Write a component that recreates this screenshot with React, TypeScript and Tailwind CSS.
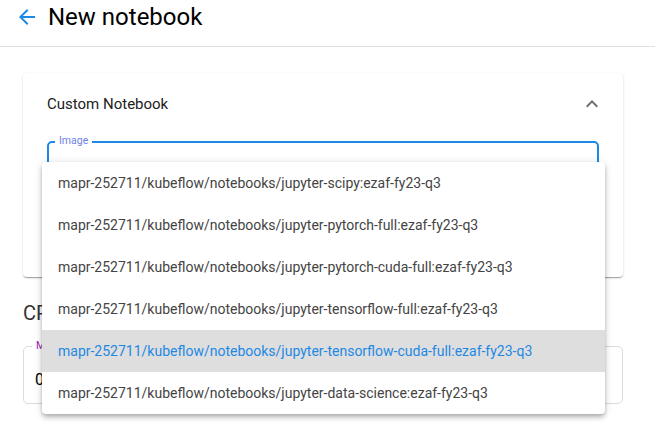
import React from "react";

const images = [
  "mapr-252711/kubeflow/notebooks/jupyter-scipy:ezaf-fy23-q3",
  "mapr-252711/kubeflow/notebooks/jupyter-pytorch-full:ezaf-fy23-q3",
  "mapr-252711/kubeflow/notebooks/jupyter-pytorch-cuda-full:ezaf-fy23-q3",
  "mapr-252711/kubeflow/notebooks/jupyter-tensorflow-full:ezaf-fy23-q3",
  "mapr-252711/kubeflow/notebooks/jupyter-tensorflow-cuda-full:ezaf-fy23-q3",
  "mapr-252711/kubeflow/notebooks/jupyter-data-science:ezaf-fy23-q3",
];

const selected = 4;

function ArrowBack() {
  return (
    <svg viewBox="0 0 24 24" className="h-6 w-6" fill="#1e88e5">
      <path d="M20 11H7.83l5.59-5.59L12 4l-8 8 8 8 1.41-1.41L7.83 13H20v-2z" />
    </svg>
  );
}

function ExpandLess() {
  return (
    <svg viewBox="0 0 24 24" className="h-6 w-6" fill="#6f6f6f">
      <path d="M12 8l-6 6 1.41 1.41L12 10.83l4.59 4.58L18 14z" />
    </svg>
  );
}

export default function App() {
  return (
    <div
      className="relative h-[431px] w-[655px] overflow-hidden bg-white"
      style={{ fontFamily: "Roboto, 'Liberation Sans', sans-serif" }}
    >
      <header className="flex h-[47px] items-center gap-[9px] border-b border-[#e0e0e0] pb-[12px] pl-[15px]">
        <ArrowBack />
        <h1 className="text-[24px] leading-[24px] text-black">New notebook</h1>
      </header>

      <div className="ml-[23px] w-[600px] pt-[26px]">
        <section className="rounded-[4px] bg-white px-6 pb-6 pt-5 shadow-[0_2px_1px_-1px_rgba(0,0,0,0.2),0_1px_1px_0_rgba(0,0,0,0.14),0_1px_3px_0_rgba(0,0,0,0.12)]">
          <div className="flex h-[22px] items-center justify-between">
            <span className="text-[15px] text-[#212121]">Custom Notebook</span>
            <span className="-mr-[5px]">
              <ExpandLess />
            </span>
          </div>
          <div className="relative mt-[26px] h-[56px] rounded-[5px] border-2 border-[#1e88e5]">
            <span className="absolute -top-[9px] left-[6px] bg-white px-[4px] text-[10.5px] leading-[14px] text-[#6e7fe6]">
              Image
            </span>
          </div>
          <div className="h-[56px]" />
        </section>

        <h2 className="mt-[24px] text-[20px] leading-[24px] text-[#333]">CPU / RAM</h2>
        <div className="relative mt-[21px] h-[58px] rounded-[5px] border border-[#dcdcdc]">
          <span className="absolute -top-[8px] left-[8px] bg-white px-[4px] text-[10.5px] leading-[14px] text-[#9c27b0]">
            Minimum CPU
          </span>
          <span className="absolute left-[11px] top-[23px] text-[16px] leading-[20px] text-black">0.5</span>
        </div>
      </div>

      <div className="absolute left-[42px] top-[162px] w-[563px] overflow-hidden rounded-[4px] bg-white shadow-[0_2px_4px_-1px_rgba(0,0,0,0.2),0_4px_5px_0_rgba(0,0,0,0.14),0_1px_10px_0_rgba(0,0,0,0.12)]">
        {images.map((img, i) => (
          <div
            key={img}
            className={
              i === selected
                ? "flex h-[42px] items-center bg-[#dedede] px-4 text-[14px] text-[#1e88e5]"
                : "flex h-[42px] items-center px-4 text-[14px] text-[#444]"
            }
          >
            {img}
          </div>
        ))}
      </div>
    </div>
  );
}
